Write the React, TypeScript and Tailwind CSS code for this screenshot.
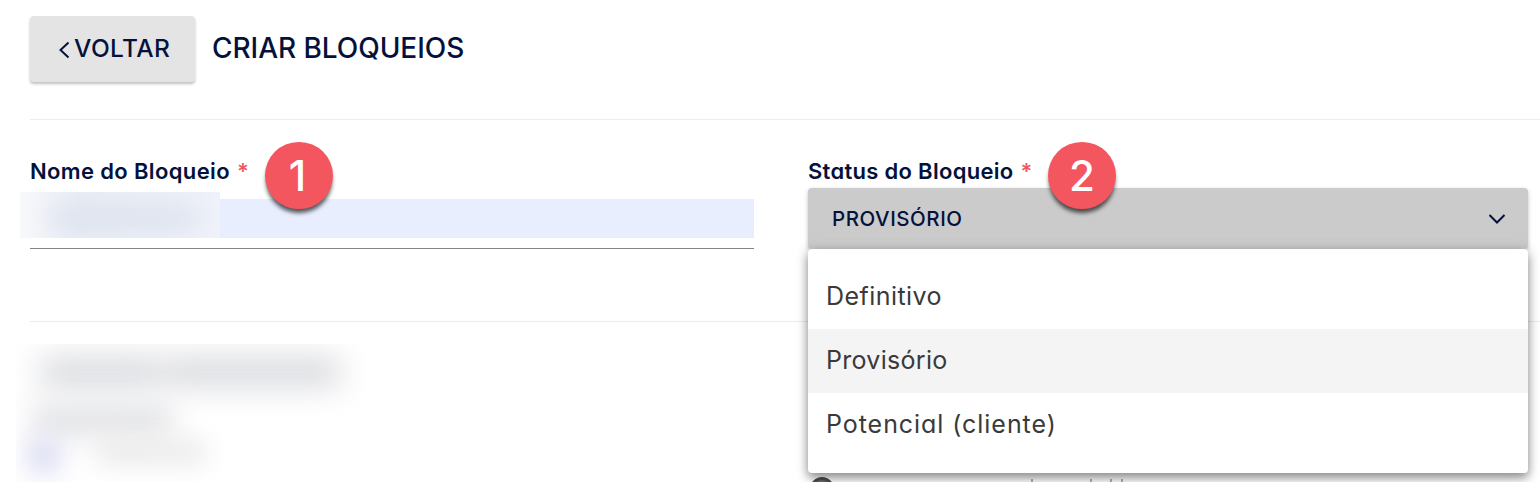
import type { ReactNode } from "react";

const OPTIONS = [
  { label: "Definitivo", className: "tracking-[0.45px]" },
  { label: "Provisório", className: "bg-[#f4f4f4] tracking-[0.3px]" },
  { label: "Potencial (cliente)", className: "tracking-[0.95px]" },
];

function FieldLabel({ children, className }: { children: ReactNode; className: string }) {
  return (
    <label className="-mt-px flex h-7 items-center whitespace-nowrap text-[22px] leading-7 font-semibold text-[#04123b]">
      <span className={className}>{children}</span>
      <span className="ml-[7px] font-semibold text-[#f4565f]">*</span>
    </label>
  );
}

function StepBadge({ n, className }: { n: number; className: string }) {
  return (
    <span
      className={`absolute z-20 flex items-center justify-center rounded-full bg-[#f4565f] text-[42px] leading-none font-medium text-white shadow-[0_5px_4px_-1px_rgba(0,0,0,0.65)] ${className}`}
    >
      {n}
    </span>
  );
}

export default function App() {
  return (
    <div className="relative h-[482px] w-[1540px] overflow-hidden bg-white pl-[30px] font-['Inter',sans-serif] text-[#04123b] [font-feature-settings:'cv11']">
      <header className="flex h-[120px] items-start border-b border-[#ececec] pt-4">
        <button className="flex h-[66px] w-[165px] items-center rounded-[4px] bg-[#e4e4e4] pl-[28px] text-[24.5px] font-medium shadow-[0_2px_3px_rgba(0,0,0,0.25)]">
          <svg width="12" height="18" viewBox="0 0 12 18" fill="none" stroke="currentColor" strokeWidth="2" className="mt-[2px] mr-1">
            <path d="M10.500 1.500 2.500 9l8 7.500" />
          </svg>
          <span className="pb-[2px] tracking-[0.4px]">VOLTAR</span>
        </button>
        <h1 className="ml-[17px] flex h-[66px] items-center pb-[2px] text-[28px] font-medium whitespace-nowrap tracking-[-0.05px]">
          CRIAR BLOQUEIOS
        </h1>
      </header>

      <main>
        <section className="flex h-[202px] gap-[54px] border-b border-[#ececec] pt-[38px]">
          <div className="relative w-[724px]">
            <FieldLabel className="tracking-[0.36px]">Nome do Bloqueio</FieldLabel>
            <div className="mt-[14px] h-[50px] border-b border-[#858585]">
              <div className="h-[39px] bg-[#e8eefe]" />
            </div>
            <div className="absolute top-[34px] -left-[10px] h-[46px] w-[200px] overflow-hidden bg-linear-to-r from-[#f8f9fb] via-[#e9edf5] via-30% to-[#eff2fa]">
              <div className="mt-4 ml-7 h-5 w-[150px] rounded-full bg-[#dbe0ec] blur-[12px]" />
            </div>
            <StepBadge n={1} className="-top-[16px] left-[235px] h-[67px] w-[68px] pr-[3px]" />
          </div>

          <div className="relative w-[720px]">
            <FieldLabel className="tracking-[0.3px]">Status do Bloqueio</FieldLabel>
            <button className="mt-[3px] flex h-[61px] w-full items-center justify-between rounded-[4px] bg-[#cbcbcb] pr-[22px] pl-6 text-[20.5px] font-medium shadow-[0_2px_4px_rgba(0,0,0,0.25)]">
              <span className="pt-px tracking-[0.55px]">PROVISÓRIO</span>
              <svg width="18" height="12" viewBox="0 0 18 12" fill="none" stroke="currentColor" strokeWidth="2">
                <path d="m1.500 2 7.500 7.500L16.500 2" />
              </svg>
            </button>
            <ul className="absolute top-[91px] left-0 z-10 h-[224px] w-full rounded-[4px] bg-white pt-4 text-[25px] text-[#3a3a3a] shadow-[0_5px_10px_rgba(0,0,0,0.35),0_2px_14px_rgba(0,0,0,0.2)]">
              {OPTIONS.map((option) => (
                <li key={option.label} className={`flex h-16 items-center pl-[18px] whitespace-nowrap ${option.className}`}>
                  {option.label}
                </li>
              ))}
            </ul>
            <StepBadge n={2} className="-top-[16px] left-[240px] h-[67px] w-[68px]" />
          </div>
        </section>

        <section className="flex pt-[22px]">
          <div className="-ml-[14px] h-[138px] w-[380px] overflow-hidden">
            <div className="mt-3 ml-6 flex gap-1 blur-[15px]">
              <div className="h-8 w-[120px] bg-[#dbdce0]" />
              <div className="h-8 w-[176px] bg-[#dbdce0]" />
            </div>
            <div className="mt-4 ml-4 h-8 w-[140px] bg-[#e2e3e6] blur-[14px]" />
            <div className="mt-1 ml-3 flex gap-9 blur-[13px]">
              <div className="h-8 w-8 bg-[#d8d9f2]" />
              <div className="h-6 w-[110px] bg-[#e9e9e9]" />
            </div>
          </div>
          <div className="mt-[133px] ml-[414px] flex h-6 items-start">
            <span className="size-6 shrink-0 rounded-full border-[3px] border-[#4d4d4d] bg-[#6a6a6a]" />
            <span className="mt-[2px] ml-[197px] h-[3px] w-[2px] shrink-0 bg-[#b0b0b0]" />
            <span className="mt-[2px] ml-[57px] h-[3px] w-[2px] shrink-0 bg-[#b0b0b0]" />
            <span className="mt-[2px] ml-[18px] h-[3px] w-[2px] shrink-0 bg-[#b0b0b0]" />
            <span className="mt-[2px] ml-[9px] h-[3px] w-[2px] shrink-0 bg-[#b0b0b0]" />
          </div>
        </section>
      </main>
    </div>
  );
}
